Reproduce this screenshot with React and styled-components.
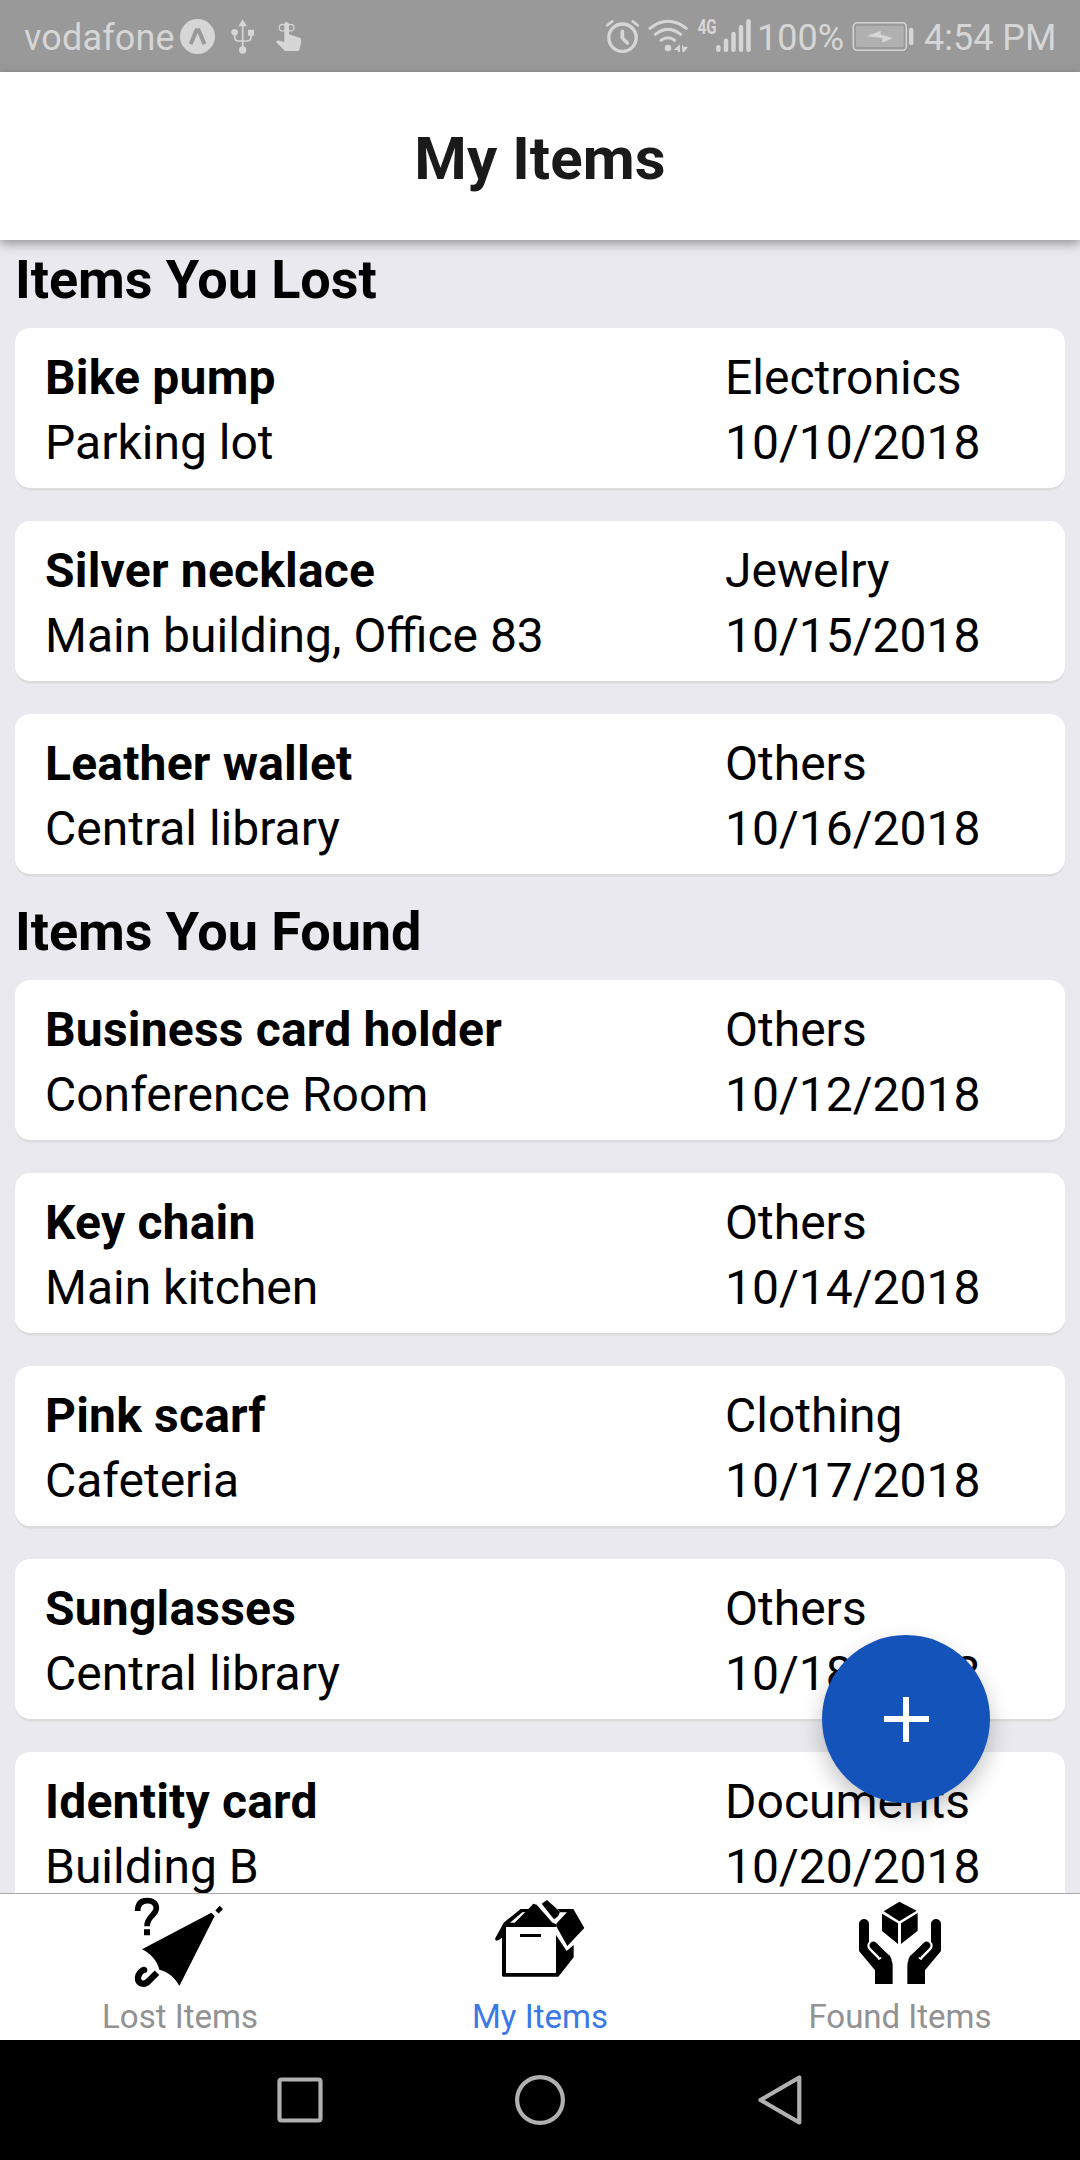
import React from "react";
import styled, { createGlobalStyle } from "styled-components";

const GlobalStyle = createGlobalStyle`
  *, *::before, *::after { box-sizing: border-box; }
  body { margin: 0; background: #e9e9ef; font-family: Roboto, "Noto Sans", sans-serif; }
  svg { display: block; flex: none; }
`;

const Screen = styled.div`
  width: 1080px;
  height: 2160px;
  display: flex;
  flex-direction: column;
  overflow: hidden;
  background: #e9e9ef;
  color: #000;
`;

const StatusBar = styled.div`
  flex: none;
  height: 72px;
  display: flex;
  justify-content: space-between;
  background: #999;
  color: #d6d6d6;
  fill: #d6d6d6;
  font-size: 36px;
  line-height: 76px;
  white-space: nowrap;
`;

const StatusGroup = styled.div`
  display: flex;
  gap: ${(p) => p.$gap || 0}px;
`;

const StatusText = styled.div`
  width: ${(p) => p.$width}px;
  padding-left: ${(p) => p.$inset}px;
  letter-spacing: ${(p) => p.$tracking || 0}px;
`;

const Header = styled.header`
  flex: none;
  height: 168px;
  display: flex;
  align-items: center;
  justify-content: center;
  padding-top: 6px;
  background: #fff;
  box-shadow: 0 4px 10px rgba(0, 0, 0, 0.36);
  z-index: 1;
`;

const Title = styled.h1`
  margin: 0;
  font-size: 60px;
  line-height: 70px;
  font-weight: 700;
  letter-spacing: 0.1px;
  color: #1a1a1a;
`;

const Content = styled.main`
  position: relative;
  flex: 1;
  min-height: 0;
  overflow: hidden;
`;

const Section = styled.section`
  padding: 0 15px 18px;
`;

const SectionTitle = styled.h2`
  margin: 0;
  padding: 8px 0 16px;
  font-size: 54px;
  line-height: 64px;
  font-weight: 700;
  letter-spacing: -0.08px;
`;

const CardList = styled.div`
  display: flex;
  flex-direction: column;
  gap: 33px;
`;

const Card = styled.article`
  height: 160px;
  display: flex;
  padding: 17px 30px 13px;
  border-radius: 15px;
  background: #fff;
  box-shadow: 0 3px 0 -0.5px #dcdcdc;
  font-size: 48px;
  line-height: 65px;
  white-space: nowrap;
`;

const CardColumn = styled.div`
  flex: ${(p) => p.$grow};
  min-width: 0;
`;

const Line = styled.div`
  font-weight: ${(p) => (p.$strong ? 700 : 400)};
  letter-spacing: ${(p) => (p.$strong ? 0.2 : 0)}px;
`;

const AddButton = styled.button`
  position: absolute;
  right: 90px;
  bottom: 90px;
  width: 168px;
  height: 168px;
  padding: 0;
  border: 0;
  border-radius: 50%;
  display: flex;
  align-items: center;
  justify-content: center;
  background: #1453ba;
  box-shadow: 0 10px 22px rgba(0, 0, 0, 0.24);
`;

const TabBar = styled.nav`
  flex: none;
  height: 147px;
  display: grid;
  grid-template-columns: repeat(3, 1fr);
  border-top: 1px solid #a9a9a9;
  background: #fff;
`;

const Tab = styled.div`
  display: flex;
  flex-direction: column;
  align-items: center;
  padding-top: 3px;
  gap: 10px;
  color: ${(p) => (p.$active ? "#3b78e7" : "#929292")};
  font-size: 33px;
  line-height: 39px;
`;

const NavBar = styled.div`
  flex: none;
  height: 120px;
  display: flex;
  align-items: center;
  justify-content: center;
  gap: 180px;
  background: #000;
`;

const StatusIcon = ({ x, width, children }) => (
  <svg width={width / 3} height="72" viewBox={`${x} 0 ${width} 216`}>{children}</svg>
);

const TabIcon = ({ children }) => (
  <svg width="90" height="90" viewBox="135 51 270 270" overflow="visible">{children}</svg>
);

const NavIcon = ({ children }) => (
  <svg width="60" height="60" viewBox="-30 -30 60 60" fill="none" stroke="#b0b0b0" strokeWidth="4.2" strokeLinejoin="round">
    {children}
  </svg>
);

const UmbrellaIcon = () => (
  <TabIcon>
    <path d="M143 93C143 72 153 62 172 62C190 62 199 72 199 85C199 105 171 108 171 139" fill="none" stroke="#000" strokeWidth="17" />
    <path d="M162 148h18v18h-18zM156 208L364 98L374 108L268 318C257 295 237 276 208 269C202 244 184 222 156 208Z" />
    <path d="M381 96L394 82" stroke="#000" strokeWidth="14" />
    <path d="M201 278L176 303C163 317 143 312 144 292C145 283 154 270 164 269" fill="none" stroke="#000" strokeWidth="19" />
    <circle cx="163" cy="270" r="9" />
  </TabIcon>
);

const BoxIcon = () => (
  <TabIcon>
    <path d="M161 128L212 87H235L250 71L260 74L306 127L318 133V141H168V279H318V165L350 213L371 195V232L325 290H159L156 287V173L147 180L138 182L135 176Z" />
    <path d="M180 128L217 97L226 96L194 128Z" fill="#fff" />
    <path d="M275 71L291 60L330 95L325 108L312 118Z" />
    <path d="M322 87H370L403 144L352 198L318 137L320 130L351 97H331Z" />
    <path d="M210 162h63v9h-63z" />
  </TabIcon>
);

const Hand = () => (
  <>
    <path d="M147 132a15 15 0 0 1 30 0V205L207 240L232 220Q248 238 248 258V312H195V271L147 213Z" />
    <path d="M190 197L224 231" stroke="#fff" strokeWidth="36" strokeLinecap="round" />
    <path d="M205 241L240 276V228L218 210Z" />
    <path d="M190.500 196.500L232 238" stroke="#000" strokeWidth="23" strokeLinecap="round" />
    <path d="M207 237L212 234" stroke="#fff" strokeWidth="5" strokeLinecap="round" />
  </>
);

const HandsIcon = () => (
  <TabIcon>
    <path d="M268 65L320 92L268 124L221 94ZM216 101L264 130V192L216 153ZM273 130L323 99V152L273 192Z" />
    <Hand />
    <g transform="translate(540 0) scale(-1 1)"><Hand /></g>
  </TabIcon>
);

const StatusLeft = () => (
  <StatusGroup>
    <StatusText $width={180} $inset={24} $tracking={0.15}>vodafone</StatusText>
    <StatusGroup $gap={16}>
      <StatusIcon x={540} width={105}>
        <circle cx="592.5" cy="109.5" r="52.5" />
        <path d="M567 130L585 85H600L619 130L608 135L593 99L577 135Z" fill="#999" />
      </StatusIcon>
      <StatusIcon x={693} width={78}>
        <g fill="none" stroke="#d6d6d6" strokeWidth="5">
          <path d="M728 70V150" />
          <path d="M704 101V112Q704 123 715 123H741Q753 123 753 112V101" />
        </g>
        <path d="M728 58L741 79H715ZM744 89h18v18h-18z" />
        <circle cx="704" cy="97" r="10" />
        <circle cx="728" cy="150" r="11" />
      </StatusIcon>
      <StatusIcon x={819} width={87}>
        <g fill="none" stroke="#d6d6d6" strokeWidth="3.5">
          <circle cx="848" cy="83" r="10" />
          <circle cx="872" cy="83" r="10" />
        </g>
        <path d="M853 72Q854 66 860 66Q866 66 867 72V103L903 115V128L898 151L894 153H855L828 126L833 121L853 126Z" />
      </StatusIcon>
    </StatusGroup>
  </StatusGroup>
);

const StatusRight = () => (
  <StatusGroup>
    <StatusGroup $gap={8}>
      <StatusIcon x={45} width={105}>
        <g fill="none" stroke="#d6d6d6" strokeLinecap="round" strokeLinejoin="round">
          <circle cx="97.500" cy="113" r="41" strokeWidth="10" />
          <path d="M97 94V114L112 129" strokeWidth="11" />
          <path d="M52 76L67 64M143 76L128 64" strokeWidth="8" />
        </g>
      </StatusIcon>
      <StatusIcon x={174} width={123}>
        <g fill="none" stroke="#d6d6d6" strokeWidth="9" strokeLinecap="round">
          <path d="M180 85Q234 43 289 85" />
          <path d="M196 103Q234 73 272 103" />
          <path d="M213 121Q234 106 254 121" />
        </g>
        <circle cx="234" cy="144" r="10" />
        <path d="M270 133V156H263V150H251ZM276 133L281 140H294L283 156H277Z" />
      </StatusIcon>
      <StatusIcon x={321} width={165}>
        <text x="323" y="102" fontFamily="Roboto, sans-serif" fontSize="59" fontWeight="700" textLength="57" lengthAdjust="spacingAndGlyphs">4G</text>
        <g stroke="#d6d6d6" strokeWidth="13.5" strokeLinecap="round">
          <path d="M385 142V149M408 122V149M430.500 102V149M453 82V149M475.500 64V149" />
        </g>
      </StatusIcon>
    </StatusGroup>
    <StatusText $width={100} $inset={5}>100%</StatusText>
    <StatusIcon x={786} width={186}>
      <rect x="790" y="68" width="159" height="83" rx="12" fill="none" stroke="#d6d6d6" strokeWidth="4.500" />
      <rect x="798" y="77" width="143" height="64" rx="4" fill="#b0b0b0" />
      <path d="M829 109L872 93V104L909 114L877 128V114Z" />
      <rect x="957" y="83" width="13" height="53" rx="6" />
    </StatusIcon>
    <StatusText $width={166} $inset={10}>4:54 PM</StatusText>
  </StatusGroup>
);

const sections = [
  {
    title: "Items You Lost",
    items: [
      ["Bike pump", "Parking lot", "Electronics", "10/10/2018"],
      ["Silver necklace", "Main building, Office 83", "Jewelry", "10/15/2018"],
      ["Leather wallet", "Central library", "Others", "10/16/2018"],
    ],
  },
  {
    title: "Items You Found",
    items: [
      ["Business card holder", "Conference Room", "Others", "10/12/2018"],
      ["Key chain", "Main kitchen", "Others", "10/14/2018"],
      ["Pink scarf", "Cafeteria", "Clothing", "10/17/2018"],
      ["Sunglasses", "Central library", "Others", "10/18/2018"],
      ["Identity card", "Building B", "Documents", "10/20/2018"],
    ],
  },
];

const tabs = [
  { label: "Lost Items", Icon: UmbrellaIcon },
  { label: "My Items", Icon: BoxIcon, active: true },
  { label: "Found Items", Icon: HandsIcon },
];

export default function App() {
  return (
    <Screen>
      <GlobalStyle />
      <StatusBar>
        <StatusLeft />
        <StatusRight />
      </StatusBar>
      <Header>
        <Title>My Items</Title>
      </Header>
      <Content>
        {sections.map(({ title, items }) => (
          <Section key={title}>
            <SectionTitle>{title}</SectionTitle>
            <CardList>
              {items.map(([name, place, category, date]) => (
                <Card key={name}>
                  <CardColumn $grow="0 0 680px">
                    <Line $strong>{name}</Line>
                    <Line>{place}</Line>
                  </CardColumn>
                  <CardColumn $grow="1">
                    <Line>{category}</Line>
                    <Line>{date}</Line>
                  </CardColumn>
                </Card>
              ))}
            </CardList>
          </Section>
        ))}
        <AddButton aria-label="Add item">
          <svg width="46" height="46" viewBox="0 0 46 46" fill="#fff">
            <path d="M20 1h6v45h-6zM1 20h45v6H1z" />
          </svg>
        </AddButton>
      </Content>
      <TabBar>
        {tabs.map(({ label, Icon, active }) => (
          <Tab key={label} $active={active}>
            <Icon />
            <span>{label}</span>
          </Tab>
        ))}
      </TabBar>
      <NavBar>
        <NavIcon><rect x="-20.500" y="-20.500" width="41" height="41" rx="2" /></NavIcon>
        <NavIcon><circle r="22.900" /></NavIcon>
        <NavIcon><path d="M-19.500 0L19.300 -22.500V22.500Z" /></NavIcon>
      </NavBar>
    </Screen>
  );
}
